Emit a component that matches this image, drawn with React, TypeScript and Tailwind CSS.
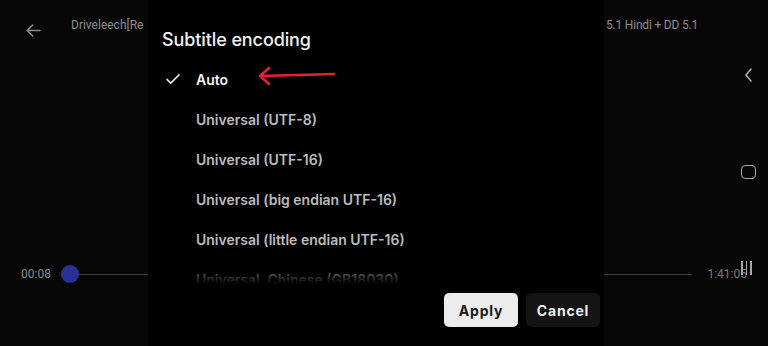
import React from "react";

const items = [
  "Auto",
  "Universal (UTF-8)",
  "Universal (UTF-16)",
  "Universal (big endian UTF-16)",
  "Universal (little endian UTF-16)",
  "Universal, Chinese (GB18030)",
];

export default function App() {
  return (
    <div className="relative w-[768px] h-[346px] overflow-hidden bg-[#070707] font-['Inter',sans-serif]">
      {/* player layer */}
      <div className="flex flex-col h-full">
        <div className="flex items-start h-[60px] pt-[16px] pl-[24px] pr-[70px]">
          <svg width="19" height="19" viewBox="0 0 24 24" className="mt-[5px]" fill="none" stroke="#8a8a8a" strokeWidth="2" strokeLinecap="round" strokeLinejoin="round">
            <path d="M20 12H4M11 5l-7 7 7 7" />
          </svg>
          <span className="ml-[28px] text-[12px] leading-[18px] text-[#8c8c8c] font-['Roboto',sans-serif]">Driveleech[Re</span>
          <span className="ml-auto text-[12px] leading-[18px] text-[#8c8c8c] font-['Roboto',sans-serif] tracking-[-0.2px]">5.1 Hindi + DD 5.1</span>
        </div>
        <div className="flex-1" />
        <div className="flex items-center h-[20px] mb-[62px] pl-[21px] pr-[21px]">
          <span className="text-[12px] text-[#8a8a8a] font-['Roboto',sans-serif]">00:08</span>
          <div className="ml-[10px] w-[18px] h-[18px] rounded-full bg-[#2b2f98]" />
          <div className="flex-1 h-[1px] bg-[#3a3a3a]" />
          <span className="ml-[15px] text-[12px] text-[#7a7a7a] font-['Roboto',sans-serif]">1:41:05</span>
        </div>
      </div>

      {/* Android nav */}
      <div className="absolute right-[12px] top-[67px] flex flex-col items-center gap-[82px]">
        <svg width="12" height="16" viewBox="0 0 12 16" fill="none" stroke="#a8a8a8" strokeWidth="1.6" strokeLinecap="round" strokeLinejoin="round">
          <path d="M8 2L3 8l5 6" />
        </svg>
        <div className="w-[15px] h-[14px] rounded-[4px] border-[1.6px] border-[#a8a8a8]" />
        <div className="flex gap-[3px] -ml-[4px]">
          <div className="w-[1.6px] h-[14px] bg-[#a8a8a8]" />
          <div className="w-[1.6px] h-[14px] bg-[#a8a8a8]" />
          <div className="w-[1.6px] h-[14px] bg-[#a8a8a8]" />
        </div>
      </div>

      {/* dialog */}
      <div className="absolute left-[148px] top-0 w-[456px] h-full bg-black flex flex-col">
        <div className="pl-[14px] pt-[28px] text-[18px] leading-[24px] font-medium text-[#f2f2f2] tracking-[-0.1px]">
          Subtitle encoding
        </div>
        <div className="relative mt-[7px] h-[225px] overflow-hidden flex flex-col">
          {items.map((t, i) => (
            <div key={t} className="flex items-center h-[40px] shrink-0">
              <div className="w-[48px] flex justify-center pl-[1px]">
                {i === 0 && (
                  <svg width="18" height="18" viewBox="0 0 24 24" fill="none" stroke="#e8e8e8" strokeWidth="2" strokeLinecap="round" strokeLinejoin="round">
                    <path d="M4 12.5l5 5L20 6.5" />
                  </svg>
                )}
              </div>
              <span className={`text-[14px] font-semibold ${i === 0 ? "text-[#f4f4f4]" : "text-[#bcbcbc]"}`}>{t}</span>
              {i === 0 && (
                <svg width="80" height="20" viewBox="0 0 80 20" className="ml-[29px] -mt-[6px]" fill="none" stroke="#e3203a" strokeWidth="2.6" strokeLinecap="round" strokeLinejoin="round">
                  <path d="M77 8L3 10M12 2L3 10l9 8" />
                </svg>
              )}
            </div>
          ))}
          <div className="absolute left-0 right-0 bottom-0 h-[14px] bg-gradient-to-b from-black/40 to-black" />
        </div>
        <div className="mt-[9px] flex justify-end gap-[8px] pr-[4px]">
          <button className="w-[74px] h-[34px] rounded-[5px] bg-[#ececec] text-[#1a1a1a] text-[14px] font-bold tracking-[0.8px]">Apply</button>
          <button className="w-[74px] h-[34px] rounded-[5px] bg-[#131313] text-[#ececec] text-[14px] font-bold tracking-[0.8px]">Cancel</button>
        </div>
      </div>
    </div>
  );
}
